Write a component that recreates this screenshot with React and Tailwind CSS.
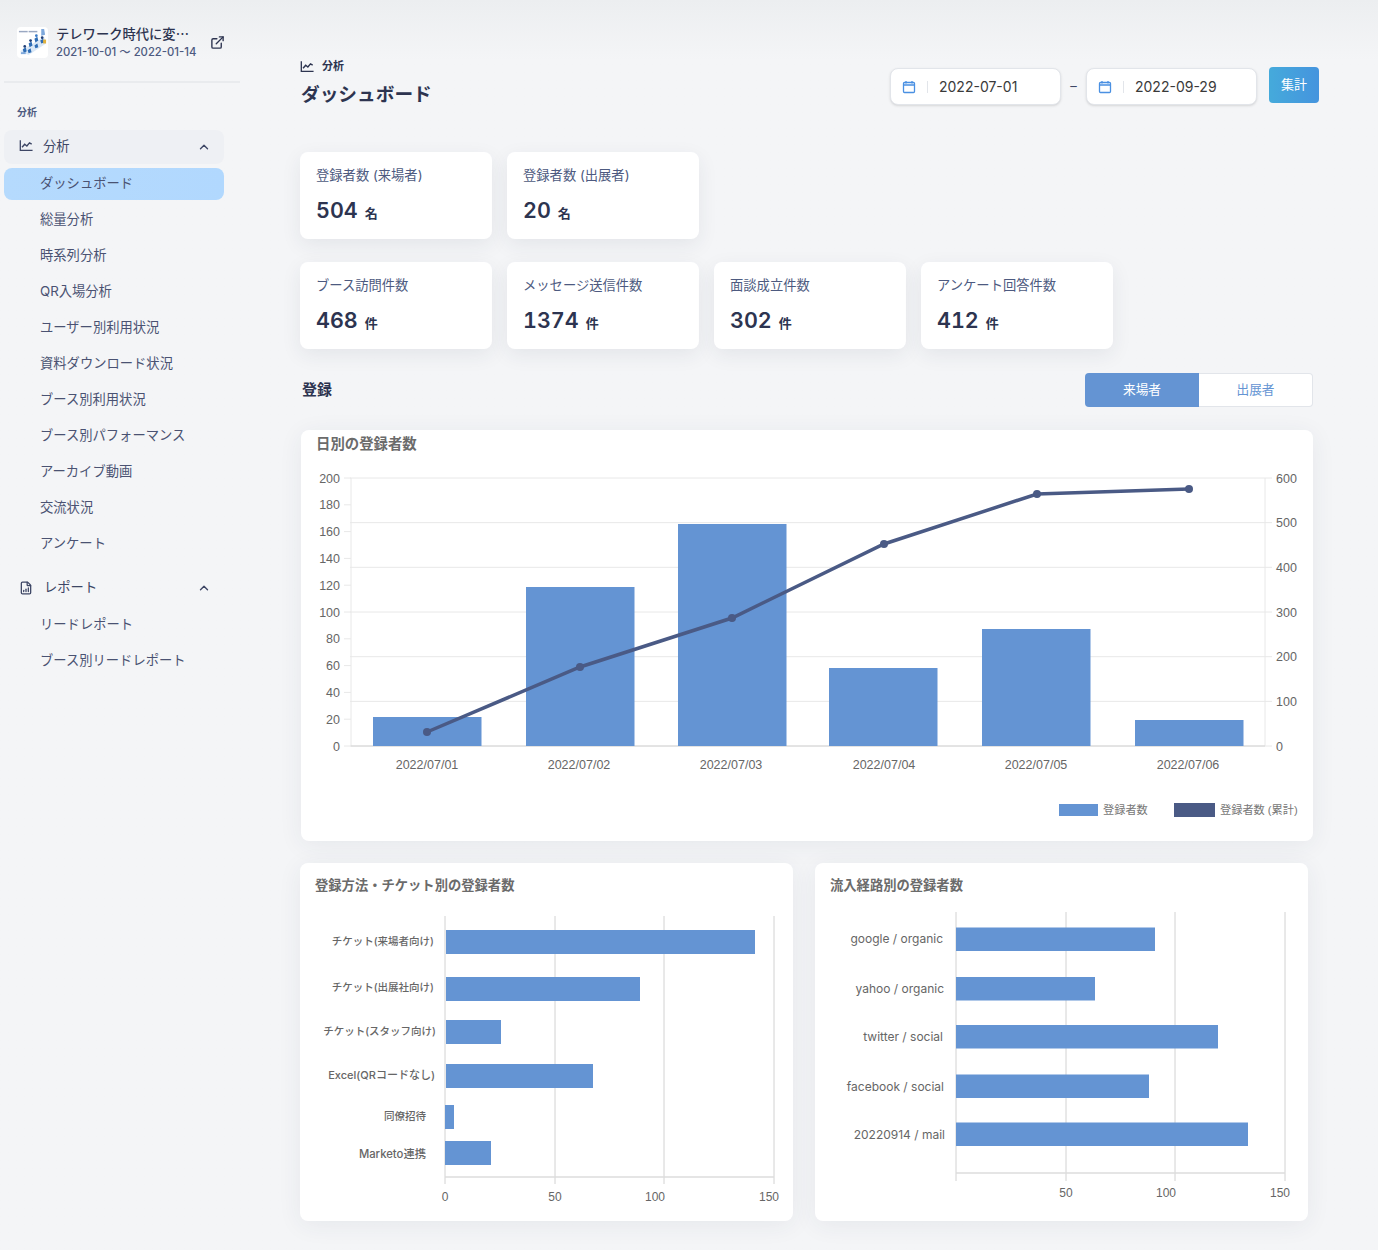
import { ChevronUp, ExternalLink, FileBarChart } from 'lucide-react';

const subItems = ['ダッシュボード', '総量分析', '時系列分析', 'QR入場分析', 'ユーザー別利用状況', '資料ダウンロード状況', 'ブース別利用状況', 'ブース別パフォーマンス', 'アーカイブ動画', '交流状況', 'アンケート'];

const FONT = '"Inter","Noto Sans CJK JP",sans-serif';
const CHART_FONT = '"Liberation Sans","Noto Sans CJK JP",sans-serif';

const ChartIcon = ({ className }) => (
  <svg viewBox="0 0 16 14" fill="none" stroke="currentColor" strokeWidth="1.5" className={className}>
    <path d="M1.5 1v11.5H15.5" />
    <path d="M3.5 9 6.5 5.5l2.5 2 3-3.5 2.5 1.5" strokeWidth="1.6" />
  </svg>
);

const CalendarIcon = () => (
  <svg viewBox="0 0 14 14" fill="none" stroke="#4a90e2" strokeWidth="1.3" className="w-[14px] h-[14px]">
    <rect x="1.5" y="2.5" width="11" height="10" rx="1" />
    <path d="M1.5 5h11M4 1v2.5M10 1v2.5" />
  </svg>
);

const Logo = () => (
  <svg viewBox="0 0 32 32" className="w-[31px] h-[31px] rounded bg-white shrink-0 mt-[3px]">
    <rect x="2" y="4" width="9" height="1.5" fill="#9aa8c2" />
    <rect x="12" y="4" width="9" height="1.5" fill="#9aa8c2" />
    <path d="M25 2l3 0 1 6-4 1z" fill="#7fa9dc" />
    <path d="M3 25 28 10l2 7-18 12z" fill="#dbe8f6" />
    <path d="M6 23l3-2 1 4-3 2zM11 24l3-2 1 4-3 1zM12 17l3-2 1 4-3 2zM18 19l3-2 1 4-3 1zM18 12l3-2 1 4-3 2zM24 14l3-2 1 4-3 1z" fill="#2f6db5" />
    <circle cx="8" cy="20" r="1.4" fill="#1f3f78" />
    <circle cx="14" cy="14" r="1.4" fill="#1f3f78" />
    <circle cx="20" cy="9" r="1.4" fill="#3a7bc8" />
    <circle cx="26" cy="11" r="1.4" fill="#1f3f78" />
    <rect x="27" y="13" width="3" height="4" fill="#e2b23c" />
    <rect x="4" y="26" width="5" height="2" fill="#7fa9dc" />
  </svg>
);

const Sidebar = () => (
  <aside className="w-[240px] shrink-0">
    <div className="h-[83px] border-b-2 border-[#e9ebee] ml-1 pl-[13px] pt-[24px] flex items-start">
      <Logo />
      <div className="ml-[8px] w-[142px]">
        <div className="text-[13.3px] leading-[20px] font-medium text-[#2d3450] whitespace-nowrap">テレワーク時代に変<span className="font-['Noto_Sans_CJK_JP']">…</span></div>
        <div className="text-[11.3px] leading-[17px] text-[#4d5a80] whitespace-nowrap font-medium">2021-10-01 ～ 2022-01-14</div>
      </div>
      <ExternalLink className="w-[15px] h-[15px] ml-[12px] mt-[11px] text-[#2d3450]" strokeWidth={2.2} />
    </div>
    <div className="pl-[17px] mt-[23px] text-[10px] leading-[12px] font-semibold text-[#4d5a80]">分析</div>
    <div className="mt-3 ml-1 w-[220px]">
      <div className="h-[34px] rounded-lg bg-[#eef0f4] flex items-center pl-[15px] pr-[13px] text-[#3d4665] text-[13.3px]">
        <ChartIcon className="w-[14px] h-[13px] -mt-[3px] text-[#3d4665]" />
        <span className="ml-[10px]">分析</span>
        <ChevronUp className="w-[14px] h-[14px] ml-auto" strokeWidth={2.4} />
      </div>
      <div className="mt-1">
        {subItems.map((t, i) => (
          <div key={t} className={i === 0
            ? 'h-[32px] mb-[2px] flex items-center pl-[36px] text-[13.3px] text-[#4a5272] bg-gradient-to-r from-[#b5dafd] to-[#b1d8fe] rounded-lg'
            : 'h-[36px] flex items-center pl-[36px] text-[13.3px] text-[#4a5272]'}>{t}</div>
        ))}
      </div>
      <div className="h-[36px] mt-[8px] flex items-center pl-[15px] pr-[13px] text-[#3d4665] text-[13.3px]">
        <FileBarChart className="w-[14px] h-[14px]" strokeWidth={2.2} />
        <span className="ml-[11px]">レポート</span>
        <ChevronUp className="w-[14px] h-[14px] ml-auto" strokeWidth={2.4} />
      </div>
      <div className="h-[36px] mt-[1px] flex items-center pl-[36px] text-[13.3px] text-[#4a5272]">リードレポート</div>
      <div className="h-[36px] flex items-center pl-[36px] text-[13.3px] text-[#4a5272]">ブース別リードレポート</div>
    </div>
  </aside>
);

const StatCard = ({ label, value, unit }) => (
  <div className="w-[192px] h-[87px] bg-white rounded-lg shadow-[0_6px_20px_rgba(40,50,80,0.08)] pl-4 pt-[14px]">
    <div className="text-[13.3px] leading-[18px] text-[#4d5a80] whitespace-nowrap">{label}</div>
    <div className="mt-[13px] flex items-baseline text-[#2d3450] leading-[26px]">
      <span className="text-[21.5px] font-semibold tabular-nums">{value}</span>
      <span className="ml-[7px] text-[13px] font-semibold">{unit}</span>
    </div>
  </div>
);

const DateInput = ({ value }) => (
  <div className="w-[171px] h-[37px] bg-white border border-[#e2e5ea] rounded-lg shadow-sm flex items-center pl-[11px]">
    <CalendarIcon />
    <span className="ml-[11px] w-px h-[12px] bg-[#e2e5ea]" />
    <span className="ml-[11px] text-[14px] text-[#3a3a3a]">{value}</span>
  </div>
);

const GRID = '#e8e8e8';
const AXIS = '#666666';

const MainChart = () => {
  const leftVals = [200, 180, 160, 140, 120, 100, 80, 60, 40, 20, 0];
  const rightVals = [600, 500, 400, 300, 200, 100, 0];
  const bars = [[373, 717], [526, 587], [678, 524], [829, 668], [982, 629], [1135, 720]];
  const dates = ['2022/07/01', '2022/07/02', '2022/07/03', '2022/07/04', '2022/07/05', '2022/07/06'];
  const xs = [427, 579, 731, 884, 1036, 1188];
  const line = [[427, 732], [580, 667], [732, 618], [884, 544], [1037, 494], [1189, 489]];
  return (
    <svg viewBox="301 460 1012 381" className="w-[1012px] h-[381px] block" fontFamily={CHART_FONT}>
      {leftVals.map((v, i) => {
        const y = 478 + i * 26.8;
        return (
          <g key={v}>
            <line x1="344" x2="351" y1={y} y2={y} stroke={GRID} />
            <text x="340" y={y + 4.5} textAnchor="end" fontSize="12.5" fill={AXIS}>{v}</text>
          </g>
        );
      })}
      {rightVals.map((v, i) => {
        const y = 478 + i * 44.67;
        return (
          <g key={v}>
            <line x1="350" x2="1272" y1={y} y2={y} stroke={GRID} />
            <text x="1276" y={y + 4.5} fontSize="12.5" fill={AXIS}>{v}</text>
          </g>
        );
      })}
      <line x1="351" x2="351" y1="478" y2="746" stroke={GRID} />
      <line x1="1265" x2="1265" y1="478" y2="746" stroke={GRID} />
      <line x1="351" x2="1265" y1="746" y2="746" stroke="#d4d4d4" />
      {bars.map(([x, y]) => (
        <rect key={x} x={x} y={y} width="108.5" height={746 - y} fill="#6494d3" />
      ))}
      <polyline points={line.map(p => p.join(',')).join(' ')} fill="none" stroke="#4a5a85" strokeWidth="3.5" />
      {line.map(([x, y]) => (
        <circle key={x} cx={x} cy={y} r="4" fill="#4a5a85" />
      ))}
      {dates.map((d, i) => (
        <text key={d} x={xs[i]} y="769" textAnchor="middle" fontSize="12.5" fill={AXIS}>{d}</text>
      ))}
      <rect x="1059" y="804" width="39" height="12" fill="#6494d3" />
      <text x="1103" y="813.5" fontSize="11.2" fill="#777">登録者数</text>
      <rect x="1174" y="803" width="41" height="14" fill="#4a5a85" />
      <text x="1220" y="813.5" fontSize="11.2" fill="#777">登録者数 (累計)</text>
    </svg>
  );
};

const LeftBars = () => {
  const rows = [
    ['チケット(来場者向け)', 434, 930, 755, 941, 10.5, 446],
    ['チケット(出展社向け)', 434, 977, 640, 987, 10.5, 446],
    ['チケット(スタッフ向け)', 436, 1020, 501, 1031, 10.5, 446],
    ['Excel(QRコードなし)', 435, 1064, 593, 1075, 11, 446],
    ['同僚招待', 426, 1105, 454, 1116, 10.5, 445],
    ['Marketo連携', 426, 1141, 491, 1154, 11.3, 445],
  ];
  return (
    <svg viewBox="300 900 493 321" className="w-[493px] h-[321px] block" fontFamily={FONT}>
      {[445, 555, 664, 774].map(x => (
        <line key={x} x1={x} x2={x} y1="916" y2="1184" stroke="#d2d2d2" />
      ))}
      <line x1="445" x2="774" y1="1177" y2="1177" stroke="#dcdcdc" strokeWidth="1.5" />
      {rows.map(([label, tx, y, x2, ty, size, x1]) => (
        <g key={label}>
          <rect x={x1} y={y} width={x2 - x1} height="24" fill="#6494d3" />
          <text x={tx} y={ty + 4} textAnchor="end" fontSize={size} fontWeight="500" fill="#666">{label}</text>
        </g>
      ))}
      {[[445, '0'], [555, '50'], [655, '100'], [769, '150']].map(([x, t]) => (
        <text key={t} x={x} y="1201" textAnchor="middle" fontSize="12" fontFamily={CHART_FONT} fill={AXIS}>{t}</text>
      ))}
    </svg>
  );
};

const RightBars = () => {
  const rows = [
    ['google / organic', 943, 927.5, 1155, 939],
    ['yahoo / organic', 944, 977, 1095, 989],
    ['twitter / social', 943, 1025, 1218, 1037],
    ['facebook / social', 944, 1074.5, 1149, 1087],
    ['20220914 / mail', 945, 1122.5, 1248, 1135],
  ];
  return (
    <svg viewBox="815 900 493 321" className="w-[493px] h-[321px] block" fontFamily={FONT}>
      {[956, 1066, 1175, 1285].map(x => (
        <line key={x} x1={x} x2={x} y1="912" y2="1181" stroke="#d2d2d2" />
      ))}
      <line x1="956" x2="1285" y1="1173" y2="1173" stroke="#dcdcdc" strokeWidth="1.5" />
      {rows.map(([label, tx, y, x2, ty]) => (
        <g key={label}>
          <rect x="956" y={y} width={x2 - 956} height="23.5" fill="#6494d3" />
          <text x={tx} y={ty + 4} textAnchor="end" fontSize="12" fill="#666">{label}</text>
        </g>
      ))}
      {[[1066, '50'], [1166, '100'], [1280, '150']].map(([x, t]) => (
        <text key={t} x={x} y="1197" textAnchor="middle" fontSize="12" fontFamily={CHART_FONT} fill={AXIS}>{t}</text>
      ))}
    </svg>
  );
};

const App = () => (
  <div lang="ja" className="w-[1378px] h-[1250px] overflow-hidden flex font-['Inter','Noto_Sans_CJK_JP',sans-serif] bg-gradient-to-b from-[#eceef0] to-[#f4f5f7] to-[60px]">
    <Sidebar />
    <main className="ml-[60px] w-[1020px]">
      <div className="flex items-start h-[152px] pr-px">
        <div className="pt-[58px]">
          <div className="flex items-center text-[#2d3450]">
            <ChartIcon className="w-[14px] h-[13px]" />
            <span className="ml-2 text-[11px] leading-[16px] font-semibold">分析</span>
          </div>
          <h1 className="mt-[7px] ml-px text-[18.7px] leading-[28px] font-bold text-[#2d3450]">ダッシュボード</h1>
        </div>
        <div className="ml-auto flex items-start pt-[67px]">
          <div className="mt-px"><DateInput value="2022-07-01" /></div>
          <span className="w-[25px] text-center text-[#3d4665] text-[13px] leading-[38px]">–</span>
          <div className="mt-px"><DateInput value="2022-09-29" /></div>
          <button className="ml-[12px] w-[50px] h-[36px] rounded bg-gradient-to-r from-[#45aadb] to-[#4594de] text-white text-[13px]">集計</button>
        </div>
      </div>
      <div className="flex gap-[15px]">
        <StatCard label="登録者数 (来場者)" value="504" unit="名" />
        <StatCard label="登録者数 (出展者)" value="20" unit="名" />
      </div>
      <div className="flex gap-[15px] mt-[23px]">
        <StatCard label="ブース訪問件数" value="468" unit="件" />
        <StatCard label="メッセージ送信件数" value="1374" unit="件" />
        <StatCard label="面談成立件数" value="302" unit="件" />
        <StatCard label="アンケート回答件数" value="412" unit="件" />
      </div>
      <div className="flex items-center justify-between mt-[24px] ml-[2px] w-[1011px] h-[34px]">
        <h2 className="text-[15px] font-bold text-[#2d3450] mt-px">登録</h2>
        <div className="flex w-[228px] h-[34px] text-[12.7px]">
          <div className="w-[114px] rounded-l bg-[#6494d3] text-white flex items-center justify-center">来場者</div>
          <div className="flex-1 rounded-r border border-l-0 border-[#e2e5ea] bg-white text-[#6494d3] flex items-center justify-center">出展者</div>
        </div>
      </div>
      <section className="mt-[23px] ml-px w-[1012px] h-[411px] bg-white rounded-lg shadow-[0_4px_24px_rgba(40,50,80,0.07)]">
        <h3 className="h-[30px] pl-[15px] pt-[4px] text-[14.4px] leading-[20px] font-bold text-[#6b6b6b]">日別の登録者数</h3>
        <MainChart />
      </section>
      <div className="flex gap-[22px] mt-[22px]">
        <section className="w-[493px] h-[358px] bg-white rounded-lg shadow-[0_4px_24px_rgba(40,50,80,0.07)]">
          <h3 className="h-[37px] pl-[15px] pt-[13px] text-[13.3px] leading-[18px] font-bold text-[#6b6b6b]">登録方法・チケット別の登録者数</h3>
          <LeftBars />
        </section>
        <section className="w-[493px] h-[358px] bg-white rounded-lg shadow-[0_4px_24px_rgba(40,50,80,0.07)]">
          <h3 className="h-[37px] pl-[15px] pt-[13px] text-[13.3px] leading-[18px] font-bold text-[#6b6b6b]">流入経路別の登録者数</h3>
          <RightBars />
        </section>
      </div>
    </main>
  </div>
);

export default App;
